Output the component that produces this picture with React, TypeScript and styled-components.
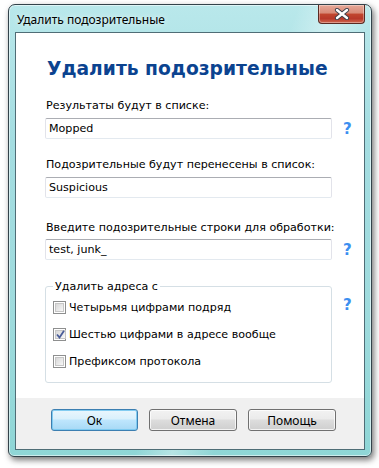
import styled, { createGlobalStyle } from 'styled-components'

const Global = createGlobalStyle`
  html, body { margin: 0; padding: 0; background: #ffffff; }
  body { width: 379px; height: 468px; overflow: hidden; }
`

const Stage = styled.div`
  padding: 4px 0 0 8px;
`

const Frame = styled.div`
  width: 364px;
  height: 453px;
  box-sizing: border-box;
  border: 1px solid #33434b;
  border-radius: 7px 7px 6px 6px;
  background:
    linear-gradient(110deg, rgba(255,255,255,0) 55%, rgba(255,255,255,0.35) 62%, rgba(255,255,255,0) 70%),
    linear-gradient(180deg, #b9e8eb 0%, #a4dde1 30%, #9edbdd 70%, #8fd6d6 100%);
  box-shadow: 2px 3px 6px rgba(0, 0, 0, 0.55), inset 0 0 0 1px rgba(255, 255, 255, 0.55);
  padding: 0 6px 6px 6px;
  display: flex;
  flex-direction: column;
`

const TitleBar = styled.div`
  height: 27px;
  display: flex;
  justify-content: space-between;
  align-items: flex-start;
`

const Title = styled.div`
  font-family: "Noto Sans", "Open Sans", sans-serif;
  font-size: 12px;
  color: #000;
  padding: 6px 0 0 2px;
  text-shadow: 0 0 6px rgba(255, 255, 255, 0.9);
`

const CloseButton = styled.div`
  width: 47px;
  height: 19px;
  box-sizing: border-box;
  border: 1px solid #5a2a22;
  border-top: none;
  border-radius: 0 0 4px 4px;
  background: linear-gradient(180deg, #e6a898 0%, #d88a77 45%, #c1462f 50%, #b8392a 75%, #d0674f 100%);
  box-shadow: inset 0 0 0 1px rgba(255, 255, 255, 0.35);
  display: flex;
  align-items: center;
  justify-content: center;
`

const Client = styled.div`
  flex: 1;
  border: 1px solid #4f6d76;
  background: #fff;
  display: flex;
  flex-direction: column;
  font-family: "DejaVu Sans", Verdana, sans-serif;
  font-size: 11.1px;
  color: #000;
`

const Body = styled.div`
  flex: 1;
  padding: 24px 0 0 29px;
  display: flex;
  flex-direction: column;
`

const Heading = styled.h1`
  margin: 0 0 18px 2px;
  font-family: "DejaVu Sans", Verdana, sans-serif;
  font-size: 18.7px;
  line-height: 24px;
  font-weight: bold;
  color: #0b4390;
`

const Label = styled.div<{ $gap: number }>`
  margin: 0 0 ${p => p.$gap}px 1px;
  line-height: 13px;
  white-space: nowrap;
`

const Row = styled.div`
  display: flex;
  align-items: center;
`

const Input = styled.div`
  width: 287px;
  height: 21px;
  box-sizing: border-box;
  border: 1px solid #e2e3ea;
  border-top-color: #abadb3;
  border-bottom-color: #e3e9ef;
  border-radius: 2px;
  padding: 0 3px;
  display: flex;
  align-items: center;
  line-height: 13px;
`

const Help = styled.span<{ $hidden?: boolean; $top?: number }>`
  margin-left: 11px;
  margin-top: ${p => p.$top ?? 0}px;
  font-family: "DejaVu Sans", Verdana, sans-serif;
  font-weight: bold;
  font-size: 15px;
  color: #3c8ff0;
  visibility: ${p => (p.$hidden ? 'hidden' : 'visible')};
`

const Field = styled.div<{ $gap: number }>`
  margin-bottom: ${p => p.$gap}px;
`

const GroupRow = styled.div`
  display: flex;
  align-items: flex-start;
`

const Group = styled.fieldset`
  width: 287px;
  height: 103px;
  box-sizing: border-box;
  margin: 0;
  border: 1px solid #d5dfe5;
  border-radius: 3px;
  padding: 8px 0 0 7px;
  display: flex;
  flex-direction: column;
  gap: 14px;
`

const Legend = styled.legend`
  padding: 0 2px;
  margin-left: 0;
  line-height: 13px;
`

const CheckRow = styled.div`
  display: flex;
  align-items: center;
  gap: 3px;
  height: 13px;
`

const Box = styled.div`
  width: 13px;
  height: 13px;
  box-sizing: border-box;
  border: 1px solid #8e8f8f;
  background: #fff;
  padding: 1px;
  display: flex;
`

const BoxInner = styled.div`
  flex: 1;
  border: 1px solid #c6c6c6;
  background: linear-gradient(135deg, #d8d8d8 0%, #eaeaea 60%, #f8f8f8 100%);
  display: flex;
  align-items: center;
  justify-content: center;
`

const Buttons = styled.div`
  height: 40px;
  background: #f0f0f0;
  display: flex;
  justify-content: flex-end;
  align-items: flex-start;
  padding: 11px 28px 0 0;
  gap: 11px;
`

const Button = styled.div<{ $primary?: boolean }>`
  width: ${p => (p.$primary ? 87 : 88)}px;
  height: 22px;
  box-sizing: border-box;
  border: 1px solid ${p => (p.$primary ? '#3c7fb1' : '#707070')};
  border-radius: 3px;
  background: ${p =>
    p.$primary
      ? 'linear-gradient(180deg, #eaf6fd 0%, #d9f0fc 45%, #bee6fd 50%, #a7d9f5 100%)'
      : 'linear-gradient(180deg, #f2f2f2 0%, #ebebeb 45%, #dddddd 50%, #cfcfcf 100%)'};
  box-shadow: inset 0 0 0 1px ${p => (p.$primary ? 'rgba(120, 200, 240, 0.9)' : 'rgba(255, 255, 255, 0.75)')};
  font-family: "Noto Sans", "Open Sans", sans-serif;
  font-size: 12px;
  display: flex;
  align-items: center;
  justify-content: center;
  color: #000;
`

const Checkbox = ({ checked }: { checked?: boolean }) => (
  <Box>
    <BoxInner>
      {checked && (
        <svg width="9" height="9" viewBox="0 0 9 9">
          <path d="M1 4.5 L3.5 7.5 L8 0.8" fill="none" stroke="#4a5d99" strokeWidth="1.8" />
        </svg>
      )}
    </BoxInner>
  </Box>
)

const CloseGlyph = () => (
  <svg width="16" height="12" viewBox="0 0 16 12">
    <path d="M3 2 L13 10 M13 2 L3 10" stroke="#3b3f4a" strokeWidth="4.2" strokeLinecap="round" />
    <path d="M3 2 L13 10 M13 2 L3 10" stroke="#ffffff" strokeWidth="2.4" strokeLinecap="round" />
  </svg>
)

export default function App() {
  return (
    <Stage>
      <Global />
      <Frame>
        <TitleBar>
          <Title>Удалить подозрительные</Title>
          <CloseButton>
            <CloseGlyph />
          </CloseButton>
        </TitleBar>
        <Client>
          <Body>
            <Heading>Удалить подозрительные</Heading>
            <Field $gap={19}>
              <Label $gap={6}>Результаты будут в списке:</Label>
              <Row>
                <Input>Mopped</Input>
                <Help>?</Help>
              </Row>
            </Field>
            <Field $gap={23}>
              <Label $gap={6}>Подозрительные будут перенесены в список:</Label>
              <Row>
                <Input>Suspicious</Input>
                <Help $hidden>?</Help>
              </Row>
            </Field>
            <Field $gap={20}>
              <Label $gap={5}>Введите подозрительные строки для обработки:</Label>
              <Row>
                <Input>test, junk_</Input>
                <Help>?</Help>
              </Row>
            </Field>
            <GroupRow>
              <Group>
                <Legend>Удалить адреса с</Legend>
                <CheckRow>
                  <Checkbox />
                  Четырьмя цифрами подряд
                </CheckRow>
                <CheckRow>
                  <Checkbox checked />
                  Шестью цифрами в адресе вообще
                </CheckRow>
                <CheckRow>
                  <Checkbox />
                  Префиксом протокола
                </CheckRow>
              </Group>
              <Help $top={16}>?</Help>
            </GroupRow>
          </Body>
          <Buttons>
            <Button $primary>Ок</Button>
            <Button>Отмена</Button>
            <Button>Помощь</Button>
          </Buttons>
        </Client>
      </Frame>
    </Stage>
  )
}
